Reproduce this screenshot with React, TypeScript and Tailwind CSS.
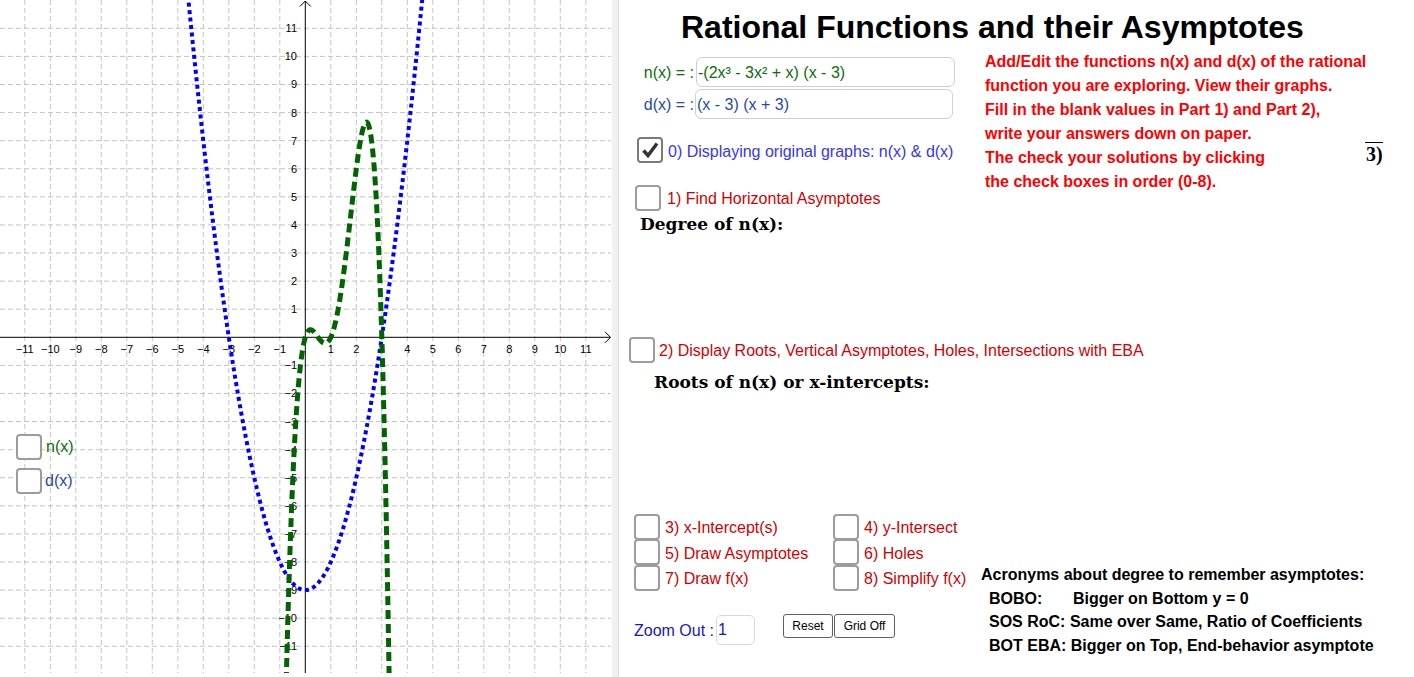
import React from "react";

const OX = 305.3;
const OY = 337.3;
const SX = 25.5;
const SY = 28.09;
const GW = 611;
const GH = 673;

function fnPath(f: (x: number) => number, x0: number, x1: number): string {
  const n = 900;
  const parts: string[] = [];
  for (let i = 0; i <= n; i++) {
    const x = x0 + ((x1 - x0) * i) / n;
    const y = f(x);
    const px = OX + x * SX;
    const py = OY - y * SY;
    parts.push(`${i === 0 ? "M" : "L"}${px.toFixed(2)} ${py.toFixed(2)}`);
  }
  return parts.join(" ");
}

const nFn = (x: number) => -(2 * x * x * x - 3 * x * x + x) * (x - 3);
const dFn = (x: number) => (x - 3) * (x + 3);

function Graph() {
  const xs: number[] = [];
  for (let i = -11; i <= 11; i++) if (i !== 0) xs.push(i);
  const ys: number[] = [];
  for (let i = -11; i <= 11; i++) if (i !== 0) ys.push(i);
  return (
    <svg width={GW} height={GH} className="block" style={{ fontFamily: '"Liberation Sans", Arial, sans-serif' }}>
      <defs>
        <clipPath id="plot">
          <rect x="0" y="0" width={GW} height={GH} />
        </clipPath>
      </defs>
      <g stroke="#c3c3c3" strokeWidth="1" strokeDasharray="5 3">
        {xs.map((i) => (
          <line key={"v" + i} x1={OX + i * SX} y1={0} x2={OX + i * SX} y2={GH} />
        ))}
        {ys.map((i) => (
          <line key={"h" + i} x1={0} y1={OY - i * SY} x2={GW} y2={OY - i * SY} />
        ))}
      </g>
      <g stroke="#000" strokeWidth="1" fill="none">
        <line x1={0} y1={OY} x2={GW - 0.5} y2={OY} />
        <polyline points={`${GW - 6},${OY - 5.5} ${GW - 0.5},${OY} ${GW - 6},${OY + 5.5}`} />
        <line x1={OX} y1={GH} x2={OX} y2={1} />
        <polyline points={`${OX - 5.5},${6.5} ${OX},${1} ${OX + 5.5},${6.5}`} />
      </g>
      <g fontSize="11" fill="#000">
        {xs.map((i) => (
          <text key={"tx" + i} x={OX + i * SX} y={353} textAnchor="middle">
            {i < 0 ? "\u2212" + -i : String(i)}
          </text>
        ))}
        {ys.map((i) => (
          <text key={"ty" + i} x={297} y={OY - i * SY + 4} textAnchor="end">
            {i < 0 ? "\u2212" + -i : String(i)}
          </text>
        ))}
      </g>
      <g clipPath="url(#plot)" fill="none">
        <path d={fnPath(dFn, -4.8, 4.8)} stroke="#0000ff" strokeWidth="4" strokeDasharray="4 3.5" />
        <path d={fnPath(nFn, -0.8, 3.35)} stroke="#006400" strokeWidth="5" strokeDasharray="9 5" />
      </g>
    </svg>
  );
}

function Box({ checked = false }: { checked?: boolean }) {
  return (
    <div
      className={
        "w-[26px] h-[26px] shrink-0 rounded-[4px] border-2 bg-white flex items-center justify-center " +
        (checked ? "border-[#7a7a7a]" : "border-[#9c9c9c]")
      }
    >
      {checked && (
        <svg width="20" height="20" viewBox="0 0 20 20">
          <path d="M3.5 10.5 L8 15.5 L17 3.5" stroke="#333" strokeWidth="3.4" fill="none" strokeLinejoin="miter" />
        </svg>
      )}
    </div>
  );
}

export default function App() {
  return (
    <div
      className="flex w-[1414px] h-[677px] overflow-hidden bg-white text-[16px]"
      style={{ fontFamily: '"Liberation Sans", Arial, sans-serif' }}
    >
      {/* Graphics view */}
      <div className="relative w-[612px] h-[677px] shrink-0">
        <Graph />
        <div className="absolute left-[16px] top-[433px] flex flex-col gap-[7px]">
          <div className="flex items-center gap-[4px] h-[27px]">
            <Box />
            <span className="text-[#0b6e0b] leading-[20px]">n(x)</span>
          </div>
          <div className="flex items-center gap-[3px] h-[27px]">
            <Box />
            <span className="text-[#1f4aa8] leading-[20px]">d(x)</span>
          </div>
        </div>
      </div>

      {/* Divider */}
      <div className="w-[7px] shrink-0 bg-[#f1f1f1] border-r border-[#dedede]" />

      {/* Controls */}
      <div className="relative flex-1 flex flex-col">
        <div className="pl-[62px] pt-[7px] h-[47px] text-[32px] leading-[40px] font-bold text-black whitespace-nowrap">
          Rational Functions and their Asymptotes
        </div>

        <div className="flex items-start">
          <div className="w-[326px] ml-[10px] flex flex-col">
            <div className="flex items-center mt-[10px] h-[30px]">
              <div className="w-[65px] text-right text-[#0b6e0b] whitespace-nowrap pt-[2px]">n(x) = :</div>
              <div className="ml-[2px] w-[259px] h-[30px] border border-[#cfcfcf] rounded-[6px] pl-[1px] pt-[2px] flex items-center text-[#0b6e0b] whitespace-nowrap">
                -(2x³ - 3x² + x) (x - 3)
              </div>
            </div>
            <div className="flex items-center mt-[2px] h-[30px]">
              <div className="w-[65px] text-right text-[#1f4aa8] whitespace-nowrap pt-[1px]">d(x) = :</div>
              <div className="ml-[1px] w-[258px] h-[30px] border border-[#cfcfcf] rounded-[6px] pl-[1px] pt-[1px] flex items-center text-[#1f4aa8] whitespace-nowrap">
                (x - 3) (x + 3)
              </div>
            </div>
            <div className="flex items-center gap-[5px] ml-[8px] mt-[18px] h-[26px]">
              <Box checked />
              <span className="text-[#3535f5] whitespace-nowrap pt-[3px]">0) Displaying original graphs: n(x) &amp; d(x)</span>
            </div>
            <div className="flex items-center gap-[6px] ml-[6px] mt-[21px] h-[27px]">
              <Box />
              <span className="text-[#d20000] whitespace-nowrap pt-[3px]">1) Find Horizontal Asymptotes</span>
            </div>
            <div
              className="ml-[11px] mt-[1px] h-[24px] leading-[24px] font-bold text-[17px] text-black whitespace-nowrap"
              style={{ fontFamily: '"DejaVu Serif", "Liberation Serif", serif' }}
            >
              Degree of n(x):
            </div>
          </div>
          <div className="ml-[30px] mt-[3px] text-[#ff0000] font-bold leading-[24px] whitespace-nowrap">
            <div>Add/Edit the functions n(x) and d(x) of the rational</div>
            <div>function you are exploring. View their graphs.</div>
            <div>Fill in the blank values in Part 1) and Part 2),</div>
            <div>write your answers down on paper.</div>
            <div>The check your solutions by clicking</div>
            <div>the check boxes in order (0-8).</div>
          </div>
        </div>

        <div
          className="absolute left-[746px] top-[142px] h-[24px] border-t border-black text-[20px] leading-[22px] font-bold text-black whitespace-nowrap pl-[1px]"
          style={{ fontFamily: '"Liberation Serif", serif' }}
        >
          3)
        </div>

        <div className="flex items-center gap-[4px] ml-[10px] mt-[101px] h-[26px]">
          <Box />
          <span className="text-[#d20000] whitespace-nowrap pt-[2px]">2) Display Roots, Vertical Asymptotes, Holes, Intersections with EBA</span>
        </div>
        <div
          className="ml-[35px] mt-[7px] h-[24px] leading-[24px] font-bold text-[17px] text-black whitespace-nowrap"
          style={{ fontFamily: '"DejaVu Serif", "Liberation Serif", serif' }}
        >
          Roots of n(x) or x-intercepts:
        </div>

        <div className="flex items-start mt-[120px]">
          <div className="w-[347px] ml-[15px] flex flex-col">
            <div className="grid grid-cols-[199px_1fr]">
              {[
                ["3) x-Intercept(s)", "4) y-Intersect"],
                ["5) Draw Asymptotes", "6) Holes"],
                ["7) Draw f(x)", "8) Simplify f(x)"],
              ].map((row, ri) => (
                <React.Fragment key={ri}>
                  {row.map((label, ci) => (
                    <div key={ci} className="flex items-center gap-[5px] h-[25.5px]">
                      <Box />
                      <span className="text-[#d20000] whitespace-nowrap pt-[3px]">{label}</span>
                    </div>
                  ))}
                </React.Fragment>
              ))}
            </div>
            <div className="flex items-start mt-[24px]">
              <div className="h-[30px] leading-[30px] text-[#1515cc] whitespace-nowrap pt-[1px]">Zoom Out :</div>
              <div className="ml-[2px] w-[39px] h-[30px] border border-[#d8d8d8] rounded-[5px] pl-[1px] pt-[1px] flex items-center text-[#1515cc]">
                1
              </div>
              <div className="ml-[28px] -mt-[1px] flex gap-[1px]">
                <div className="w-[50px] h-[24px] border-[1.5px] border-[#616161] rounded-[3px] flex items-center justify-center text-[12px] text-black bg-white">
                  Reset
                </div>
                <div className="w-[61px] h-[24px] border-[1.5px] border-[#616161] rounded-[3px] flex items-center justify-center text-[12px] text-black bg-white">
                  Grid Off
                </div>
              </div>
            </div>
          </div>
          <div className="mt-[49px] font-bold text-black leading-[23.7px] whitespace-nowrap">
            <div>Acronyms about degree to remember asymptotes:</div>
            <div className="pl-[8px]">
              <span className="inline-block w-[84px]">BOBO:</span>Bigger on Bottom y = 0
            </div>
            <div className="pl-[8px]">SOS RoC: Same over Same, Ratio of Coefficients</div>
            <div className="pl-[8px]">BOT EBA: Bigger on Top, End-behavior asymptote</div>
          </div>
        </div>
      </div>
    </div>
  );
}
